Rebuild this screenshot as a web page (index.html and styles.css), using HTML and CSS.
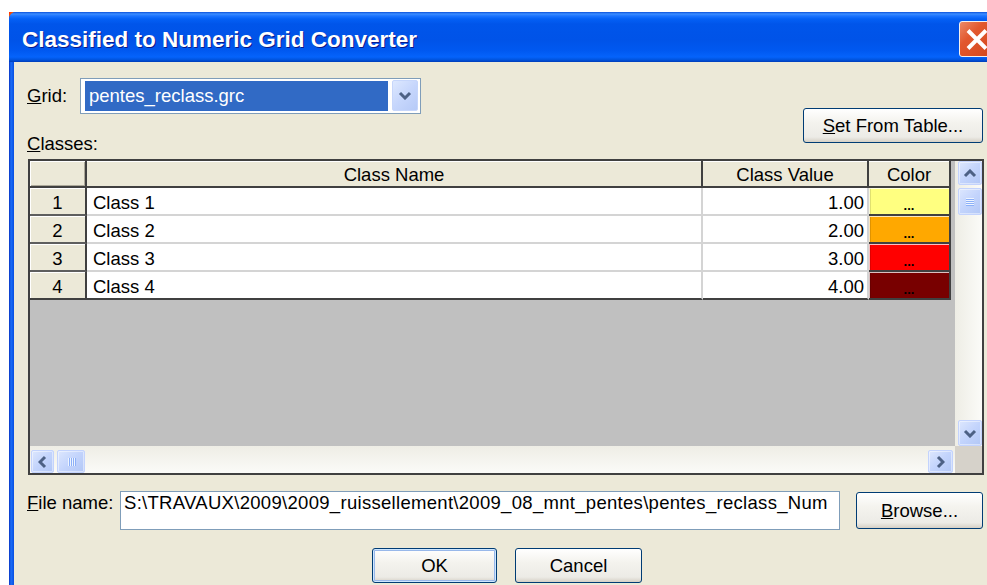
FILE: index.html
```html
<!DOCTYPE html>
<html lang="en">
<head>
<meta charset="utf-8">
<title>Classified to Numeric Grid Converter</title>
<link rel="stylesheet" href="styles.css">
</head>
<body>
<div class="desk-corner"></div>
<div class="window">
  <div class="titlebar">
    <span class="title">Classified to Numeric Grid Converter</span>
    <button type="button" class="close" aria-label="Close">
      <svg width="34" height="34" viewBox="0 0 34 34"><path d="M8 8.5 L26 26.5 M26 8.5 L8 26.5" stroke="#fff" stroke-width="4" fill="none"/></svg>
    </button>
  </div>

  <div class="client">
    <div class="grid-row">
      <span class="lbl lbl-grid"><u>G</u>rid:</span>
      <div class="combo">
        <div class="combo-sel">pentes_reclass.grc</div>
        <div class="combo-btn">
          <svg width="14" height="9" viewBox="0 0 14 9"><path d="M2 2 L7 7 L12 2" fill="none" stroke="#4D6185" stroke-width="3"/></svg>
        </div>
      </div>
    </div>

    <div class="tools-row">
      <button type="button" class="btn btn-set"><u>S</u>et From Table...</button>
    </div>

    <div class="lbl lbl-classes"><u>C</u>lasses:</div>

    <div class="datagrid">
      <div class="viewport">
        <div class="table">
          <div class="hd hd-corner"></div>
          <div class="hd">Class Name</div>
          <div class="hd">Class Value</div>
          <div class="hd">Color</div>

          <div class="rh">1</div>
          <div class="c c-name">Class 1</div>
          <div class="c c-val">1.00</div>
          <div class="sw sw-yellow">...</div>

          <div class="rh">2</div>
          <div class="c c-name">Class 2</div>
          <div class="c c-val">2.00</div>
          <div class="sw sw-orange">...</div>

          <div class="rh">3</div>
          <div class="c c-name">Class 3</div>
          <div class="c c-val">3.00</div>
          <div class="sw sw-red">...</div>

          <div class="rh last">4</div>
          <div class="c c-name last">Class 4</div>
          <div class="c c-val last">4.00</div>
          <div class="sw sw-maroon">...</div>
        </div>
      </div>

      <div class="vscroll">
        <div class="sb-btn sb-up">
          <svg width="14" height="9" viewBox="0 0 14 9"><path d="M2 7 L7 2 L12 7" fill="none" stroke="#4D6185" stroke-width="3"/></svg>
        </div>
        <div class="sb-btn sb-vthumb">
          <svg width="10" height="9" viewBox="0 0 10 9"><path d="M1 1.5h8M1 3.5h8M1 5.5h8M1 7.5h8" stroke="#EEF4FE" stroke-width="1"/><path d="M1 2.5h8M1 4.5h8M1 6.5h8M1 8.5h8" stroke="#8CB0F8" stroke-width="1"/></svg>
        </div>
        <div class="sb-btn sb-down">
          <svg width="14" height="9" viewBox="0 0 14 9"><path d="M2 2 L7 7 L12 2" fill="none" stroke="#4D6185" stroke-width="3"/></svg>
        </div>
      </div>

      <div class="hscroll">
        <div class="sb-btn sb-left">
          <svg width="9" height="14" viewBox="0 0 9 14"><path d="M7 2 L2 7 L7 12" fill="none" stroke="#4D6185" stroke-width="3"/></svg>
        </div>
        <div class="sb-btn sb-hthumb">
          <svg width="9" height="10" viewBox="0 0 9 10"><path d="M1.5 1v8M3.5 1v8M5.5 1v8M7.5 1v8" stroke="#EEF4FE" stroke-width="1"/><path d="M2.5 1v8M4.5 1v8M6.5 1v8M8.5 1v8" stroke="#8CB0F8" stroke-width="1"/></svg>
        </div>
        <div class="sb-btn sb-right">
          <svg width="9" height="14" viewBox="0 0 9 14"><path d="M2 2 L7 7 L2 12" fill="none" stroke="#4D6185" stroke-width="3"/></svg>
        </div>
      </div>

      <div class="corner"></div>
    </div>

    <div class="file-row">
      <span class="lbl lbl-file"><u>F</u>ile name:</span>
      <div class="field">S:\TRAVAUX\2009\2009_ruissellement\2009_08_mnt_pentes\pentes_reclass_Num</div>
      <button type="button" class="btn btn-browse"><u>B</u>rowse...</button>
    </div>

    <div class="actions">
      <button type="button" class="btn btn-ok">OK</button>
      <button type="button" class="btn btn-cancel">Cancel</button>
    </div>
  </div>
</div>
</body>
</html>
```

FILE: styles.css
```css
* {
  box-sizing: border-box;
}

html,
body {
  margin: 0;
  height: 100%;
  overflow: hidden;
  background: #fff;
}

body {
  position: relative;
  padding: 12px 0 0 9px;
  font-family: "Liberation Sans", Arial, sans-serif;
  font-size: 18.5px;
  color: #000;
}

/* bit of a window behind, seen through the rounded corner */
.desk-corner {
  position: absolute;
  left: 9px;
  top: 12px;
  width: 7px;
  height: 7px;
  background: linear-gradient(135deg, #ff2200 0%, #ff8a00 55%, #ffd24a 100%);
}

.window {
  position: relative;
  width: 992px;
  height: 600px;
  border-radius: 7px 7px 0 0;
  overflow: hidden;
  background: linear-gradient(90deg, #0733c4 0, #1c6ef6 2px, #0c59ea 4px, #0a4fe0 5px);
}

/* ---------- title bar ---------- */
.titlebar {
  display: flex;
  align-items: flex-start;
  height: 50px;
  padding: 0 6px 0 13px;
  background: linear-gradient(180deg,
    #0a52dc 0,
    #3c8dff 2px,
    #1b74ff 4px,
    #0460f5 7px,
    #0055ea 12px,
    #0053e8 28px,
    #0058f0 38px,
    #0563fb 45px,
    #0052db 48px,
    #003cb8 50px);
}

.title {
  padding-top: 5px;
  line-height: 45px;
  font-size: 22.5px;
  font-weight: bold;
  color: #fff;
  white-space: nowrap;
  text-shadow: 1px 1px 0 #0a1a8a;
}

.close {
  margin: 9px 0 0 auto;
  width: 36px;
  height: 36px;
  padding: 0;
  display: flex;
  align-items: center;
  justify-content: center;
  border: 1px solid #f4f0ee;
  border-radius: 3px;
  background: linear-gradient(135deg, #ec8a68 0%, #e2582e 35%, #d2461c 100%);
}

/* ---------- client area ---------- */
.client {
  margin-left: 5px;
  height: 550px;
  padding: 16px 17px 0 13px;
  background: #ece9d8;
}

.lbl {
  line-height: 22px;
  white-space: nowrap;
}

.grid-row {
  display: flex;
  align-items: center;
  height: 36px;
}

.lbl-grid {
  width: 53px;
}

.combo {
  display: flex;
  align-items: flex-start;
  width: 341px;
  height: 36px;
  border: 1px solid #7f9db9;
  background: #fff;
}

.combo-sel {
  width: 303px;
  height: 30px;
  margin: 2px 0 0 4px;
  padding-left: 4px;
  line-height: 30px;
  color: #fff;
  background: #316ac5;
  white-space: nowrap;
}

.combo-btn {
  width: 26px;
  height: 31px;
  margin: 1px 0 0 4px;
  display: flex;
  align-items: center;
  justify-content: center;
  border: 1px solid #c6d6fb;
  border-radius: 2px;
  background: linear-gradient(135deg, #dde8fe 0%, #c6d6fc 50%, #b6caf7 100%);
}

.tools-row {
  display: flex;
  justify-content: flex-end;
  margin-top: -6px;
}

.btn {
  height: 35px;
  padding: 0;
  font: inherit;
  color: #000;
  border: 1px solid #003c74;
  border-radius: 3px;
  background: linear-gradient(180deg, #ffffff 0%, #f4f3ee 40%, #ecebe6 85%, #d6d0c5 100%);
}

.btn-set {
  width: 180px;
  margin-right: 1px;
}

.lbl-classes {
  display: block;
  margin-top: -10px;
}

/* ---------- data grid ---------- */
.datagrid {
  display: grid;
  grid-template-columns: 1fr 27px;
  grid-template-rows: 1fr 27px;
  width: 956px;
  height: 316px;
  margin: 4px 0 0 1px;
  border: 2px solid #404040;
}

.viewport {
  background: #c0c0c0;
  overflow: hidden;
}

.table {
  display: grid;
  grid-template-columns: 57px 616px 166px 82px;
  grid-template-rows: 27px repeat(4, 28px);
  width: 921px;
}

.hd {
  display: flex;
  align-items: center;
  justify-content: center;
  padding-top: 3px;
  background: #ece9d8;
  border-right: 2px solid #404040;
  border-bottom: 2px solid #404040;
  box-shadow: inset 0 1px 0 #fff;
  white-space: nowrap;
}

.hd-corner {
  box-shadow: inset 1px 1px 0 #fff, inset -1px -1px 0 #aca899;
}

.rh {
  display: flex;
  align-items: center;
  justify-content: center;
  padding-top: 3px;
  background: #ece9d8;
  border-right: 2px solid #404040;
  border-bottom: 2px solid #5e5e5e;
  box-shadow: inset 1px 1px 0 #fff;
}

.c {
  display: flex;
  align-items: center;
  padding-top: 3px;
  background: #fff;
  border-bottom: 2px solid #d4d4d4;
  border-right: 2px solid #d4d4d4;
  white-space: nowrap;
}

.c-name {
  padding-left: 6px;
}

.c-val {
  justify-content: flex-end;
  padding-right: 3px;
}

.rh.last,
.c.last {
  border-bottom-color: #404040;
}

.sw {
  display: flex;
  align-items: flex-end;
  justify-content: center;
  padding-bottom: 1px;
  font-size: 13px;
  font-weight: bold;
  line-height: 14px;
  border-right: 2px solid #404040;
  border-bottom: 2px solid #404040;
  box-shadow: inset 1px 1px 0 rgba(255, 255, 255, 0.75), inset 2px 0 0 rgba(0, 0, 0, 0.12);
}

.sw-yellow { background: #ffff80; }
.sw-orange { background: #ffa800; }
.sw-red    { background: #ff0000; }
.sw-maroon { background: #780000; }

/* ---------- scroll bars ---------- */
.sb-btn {
  display: flex;
  align-items: center;
  justify-content: center;
  border: 1px solid #c3d3fd;
  border-radius: 2px;
  background: linear-gradient(135deg, #dde7fe 0%, #c3d4fc 50%, #b2c7f6 100%);
  box-shadow: inset 0 0 0 1px rgba(255, 255, 255, 0.45);
}

.vscroll {
  display: flex;
  flex-direction: column;
  padding-left: 3px;
  background: linear-gradient(90deg, #eeede5 0%, #fbfbf8 100%);
}

.sb-up {
  width: 24px;
  height: 24px;
}

.sb-vthumb {
  width: 24px;
  height: 27px;
  margin-top: 3px;
}

.sb-down {
  width: 24px;
  height: 26px;
  margin-top: auto;
}

.hscroll {
  display: flex;
  align-items: flex-start;
  padding: 4px 2px 0 1px;
  background: linear-gradient(180deg, #eeede5 0%, #fbfbf8 100%);
}

.sb-left {
  width: 23px;
  height: 23px;
}

.sb-hthumb {
  width: 28px;
  height: 23px;
  margin-left: 3px;
}

.sb-right {
  width: 25px;
  height: 23px;
  margin-left: auto;
}

.corner {
  background: #d6d2ca;
}

/* ---------- file name row ---------- */
.file-row {
  display: flex;
  align-items: flex-start;
  margin-top: 16px;
}

.lbl-file {
  width: 93px;
  padding-top: 1px;
}

.field {
  width: 720px;
  height: 39px;
  padding: 0 2px 0 3px;
  line-height: 22px;
  letter-spacing: 0.3px;
  border: 1px solid #7f9db9;
  background: #fff;
  white-space: nowrap;
  overflow: hidden;
}

.btn-browse {
  width: 127px;
  height: 37px;
  margin: 1px 0 0 16px;
}

/* ---------- dialog buttons ---------- */
.actions {
  display: flex;
  justify-content: center;
  gap: 18px;
  margin-top: 18px;
  padding-left: 3px;
}

.btn-ok {
  width: 125px;
  box-shadow: inset 0 0 0 1px #cee7ff, inset 0 0 0 2px #98b8ea;
}

.btn-cancel {
  width: 127px;
}
```
